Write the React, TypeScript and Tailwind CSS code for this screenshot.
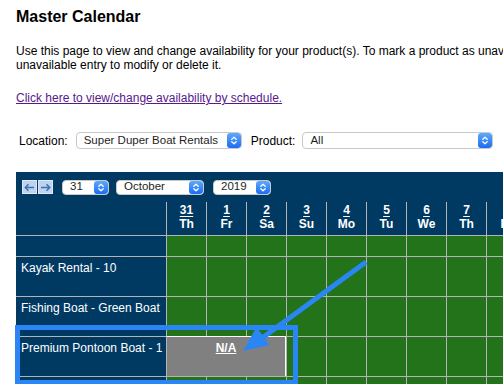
import React from "react";

const days = [
  { d: "31", w: "Th" },
  { d: "1", w: "Fr" },
  { d: "2", w: "Sa" },
  { d: "3", w: "Su" },
  { d: "4", w: "Mo" },
  { d: "5", w: "Tu" },
  { d: "6", w: "We" },
  { d: "7", w: "Th" },
  { d: "8", w: "Fr" },
];

function Chevrons() {
  return (
    <svg width="8" height="11" viewBox="0 0 8 11" fill="none">
      <path d="M1.8 4.3 L4 2.2 L6.2 4.3" stroke="white" strokeWidth="1.3" strokeLinecap="round" strokeLinejoin="round" />
      <path d="M1.8 6.7 L4 8.8 L6.2 6.7" stroke="white" strokeWidth="1.3" strokeLinecap="round" strokeLinejoin="round" />
    </svg>
  );
}

function MacSelect({ value, className }: { value: string; className: string }) {
  return (
    <div className={`flex shrink-0 items-center overflow-hidden rounded-[4px] border border-[#c9c9c9] bg-white ${className}`}>
      <span className="flex-1 truncate pl-[7px] text-[11.5px] leading-none text-[#1e1e1e]">{value}</span>
      <span className="flex h-full w-[14px] items-center justify-center rounded-[3px] bg-gradient-to-b from-[#5ea8fb] to-[#1a6cf0]">
        <Chevrons />
      </span>
    </div>
  );
}

function ArrowBtn({ dir }: { dir: "left" | "right" }) {
  return (
    <div className="flex h-[14px] w-[15px] items-center justify-center border border-[#dfe9f6] bg-[#bdd3ee]">
      <svg width="11" height="9" viewBox="0 0 11 9" fill="none">
        {dir === "left" ? (
          <path d="M10 4.5 H1.5 M4.5 1.2 L1.3 4.5 L4.5 7.8" stroke="#3f72b5" strokeWidth="1.5" />
        ) : (
          <path d="M1 4.5 H9.5 M6.5 1.2 L9.7 4.5 L6.5 7.8" stroke="#3f72b5" strokeWidth="1.5" />
        )}
      </svg>
    </div>
  );
}

function Row({ label, na }: { label?: string; na?: boolean }) {
  return (
    <div className="flex h-[40px]">
      <div className="w-[150px] shrink-0 border-t border-[#b4b4b4] bg-[#003a63] pl-[5px] pt-[4px] text-[12px] leading-[14px] text-white">
        {label}
      </div>
      {na ? (
        <div className="w-[120px] shrink-0 border-l border-r border-t border-l-[#b4b4b4] border-r-white border-t-white bg-[#808080] pt-[4px] text-center text-[12px] font-bold leading-[14px] text-white">
          <span className="underline">N/A</span>
        </div>
      ) : null}
      {days.slice(na ? 3 : 0).map((x, i) => (
        <div key={i} className="w-[40px] shrink-0 border-l border-t border-[#b4b4b4] bg-[#23731a]" />
      ))}
    </div>
  );
}

export default function App() {
  return (
    <div className="relative h-[384px] w-[503px] overflow-hidden bg-white font-['Liberation_Sans',Arial,sans-serif] text-black">
      <div className="pl-4">
        <h1 className="pt-2 text-[16px] font-bold leading-[18px]">Master Calendar</h1>
        <p className="mt-[18px] whitespace-nowrap text-[12px] leading-[14px]">
          Use this page to view and change availability for your product(s). To mark a product as unavailable, click on the desired date. Click on an
          <br />
          unavailable entry to modify or delete it.
        </p>
        <a href="#" className="mt-[19px] block text-[12px] leading-[14px] text-[#551a8b] underline">
          Click here to view/change availability by schedule.
        </a>

        <div className="mt-[27px] flex h-[17px] items-center text-[12px]">
          <span className="ml-[3px] mr-[8px]">Location:</span>
          <MacSelect value="Super Duper Boat Rentals" className="h-[17px] w-[166px]" />
          <span className="ml-[9px] mr-[7px]">Product:</span>
          <MacSelect value="All" className="h-[17px] w-[191px]" />
        </div>

        <div className="mt-[23px] w-max bg-[#003a63]">
          <div className="flex h-[30px] items-center pl-[6px]">
            <ArrowBtn dir="left" />
            <div className="w-px" />
            <ArrowBtn dir="right" />
            <div className="ml-[9px]">
              <MacSelect value="31" className="h-[15px] w-[47px]" />
            </div>
            <div className="ml-[7px]">
              <MacSelect value="October" className="h-[15px] w-[88px]" />
            </div>
            <div className="ml-[9px]">
              <MacSelect value="2019" className="h-[15px] w-[58px]" />
            </div>
          </div>

          <div className="flex h-[33px]">
            <div className="w-[150px] shrink-0" />
            {days.map((x, i) => (
              <div key={i} className="flex w-[40px] shrink-0 flex-col items-center border-l border-[#b4b4b4] pt-[1px] text-[12px] font-bold leading-[14px] text-white">
                <span className="underline underline-offset-2">{x.d}</span>
                <span>{x.w}</span>
              </div>
            ))}
          </div>

          <div className="flex h-[21px]">
            <div className="w-[150px] shrink-0 border-t border-[#b4b4b4]" />
            {days.map((x, i) => (
              <div key={i} className="w-[40px] shrink-0 border-l border-t border-[#b4b4b4] bg-[#23731a]" />
            ))}
          </div>
          <Row label="Kayak Rental - 10" />
          <Row label="Fishing Boat - Green Boat" />
          <Row label="Premium Pontoon Boat - 1" na />
          <Row />
        </div>
      </div>

      <div className="pointer-events-none absolute left-[15px] top-[325px] h-[60px] w-[283px] border-[5px] border-[#2b86f5]" />

      <svg className="pointer-events-none absolute left-0 top-0" width="503" height="384" viewBox="0 0 503 384">
        <line x1="366" y1="262" x2="258" y2="341" stroke="#2b86f5" strokeWidth="5" />
        <polygon points="243,351 256.5,327 269.5,345" fill="#2b86f5" />
      </svg>
    </div>
  );
}
